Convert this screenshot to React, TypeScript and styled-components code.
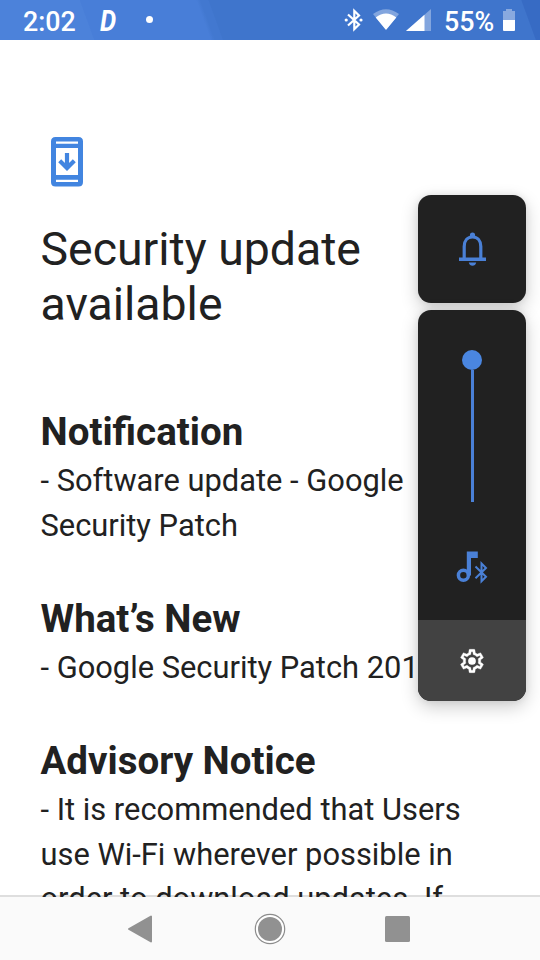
import React from "react";
import styled, { createGlobalStyle } from "styled-components";

const GlobalStyle = createGlobalStyle`
  * { box-sizing: border-box; }
  body { margin: 0; background: #fff; font-family: Roboto, "Liberation Sans", sans-serif; color: #212121; }
  svg { display: block; flex: none; }
`;

const Screen = styled.div`
  position: relative;
  display: flex;
  flex-direction: column;
  width: 540px;
  height: 960px;
  overflow: hidden;
  background: #fff;
`;

const StatusBar = styled.header`
  flex: none;
  display: flex;
  align-items: center;
  height: 40px;
  padding: 2px 25px 0 23px;
  color: #fff;
  background:
    linear-gradient(70deg, transparent 0 503px, #376bc4 504px),
    linear-gradient(70deg, #4c82da 0 88px, #487ed8 89px 198px, #4278d0 202px 209px, #3f75cc 210px);
`;

const StatusText = styled.span<{ $width: number }>`
  width: ${(p) => p.$width}px;
  padding-top: 2px;
  font-size: 26.8px;
  line-height: 32px;
  font-weight: 500;
  white-space: nowrap;
`;

const CarrierMark = styled.span`
  width: 47px;
  padding-top: 1px;
  padding-left: 1px;
  font-size: 28.5px;
  line-height: 32px;
  font-weight: 700;
  font-style: italic;
  transform: scaleX(0.9);
  transform-origin: left center;
`;

const Dot = styled.i`
  width: 7px;
  height: 7px;
  border-radius: 50%;
  background: #fff;
  margin-top: -3px;
`;

const StatusIcons = styled.div`
  display: flex;
  align-items: center;
  margin-left: auto;
`;

const IconSlot = styled.span<{ $gap: number; $lift?: number }>`
  margin-right: ${(p) => p.$gap}px;
  margin-top: ${(p) => -(p.$lift ?? 0)}px;
`;

const Content = styled.main`
  flex: 1;
  min-height: 0;
  z-index: 1;
  margin-bottom: -2px;
  overflow: hidden;
  padding: 96px 40px 0;
`;

const Title = styled.h1`
  margin: 33.5px 0 0;
  padding-left: 0.5px;
  font-size: 46.4px;
  line-height: 55px;
  font-weight: 400;
`;

const Section = styled.section<{ $top: number }>`
  margin-top: ${(p) => p.$top}px;
  padding-left: 0.5px;
`;

const Heading = styled.h2`
  margin: 0;
  font-size: 38.5px;
  line-height: 54px;
  font-weight: 700;
`;

const Line = styled.p`
  margin: 0;
  font-size: 30.85px;
  line-height: 44.6px;
  white-space: nowrap;
`;

const VolumeDialog = styled.aside`
  position: absolute;
  z-index: 2;
  top: 195px;
  right: 14px;
  width: 108px;
  display: flex;
  flex-direction: column;
  gap: 7px;
`;

const Card = styled.div<{ $height: number }>`
  display: flex;
  flex-direction: column;
  align-items: center;
  height: ${(p) => p.$height}px;
  border-radius: 13px;
  overflow: hidden;
  background: #212121;
  box-shadow: 0 6px 18px rgba(0, 0, 0, 0.2), 0 0 7px rgba(0, 0, 0, 0.08);
`;

const RingerButton = styled.button`
  flex: 1;
  width: 100%;
  display: grid;
  place-items: center;
  border: 0;
  padding: 0 0 0 1px;
  background: transparent;
`;

const Slider = styled.div`
  display: flex;
  flex-direction: column;
  align-items: center;
  height: 192px;
  padding-top: 40px;
`;

const Thumb = styled.div`
  width: 20px;
  height: 20px;
  flex: none;
  border-radius: 50%;
  background: #4a86e0;
`;

const Track = styled.div`
  width: 3px;
  flex: 1;
  background: #4a80d6;
`;

const StreamIcon = styled.div`
  flex: 1;
  padding-top: 48px;
`;

const SettingsButton = styled.button`
  width: 100%;
  height: 81px;
  display: grid;
  place-items: center;
  border: 0;
  padding: 0;
  background: #424242;
`;

const NavBar = styled.nav`
  flex: none;
  display: flex;
  align-items: center;
  justify-content: center;
  height: 65px;
  padding-right: 1px;
  border-top: 2px solid #dedede;
  background: #fafafa;
`;

const NavButton = styled.button`
  display: grid;
  place-items: center;
  width: 128px;
  height: 60px;
  border: 0;
  padding: 0;
  background: transparent;
`;

const BluetoothIcon = () => (
  <svg width="20" height="24" viewBox="0 0 20 24" fill="none" stroke="#fff" strokeWidth="2.2">
    <path d="M4 6.500 15 16.500 10.300 21.200V2.800l4.700 4.700L4 17.500" />
    <circle cx="2.200" cy="12" r="1.600" fill="#fff" stroke="none" />
    <circle cx="17" cy="12" r="1.600" fill="#fff" stroke="none" />
  </svg>
);

const WifiIcon = () => (
  <svg width="26" height="22" viewBox="0 0 26 22" fill="#fff">
    <path d="M0 5Q13-4.400 26 5L13 21Z" opacity=".35" />
    <path d="M2.700 8.500Q13 .6 23.300 8.500L13.800 20q-.8 1-1.600 0Z" />
  </svg>
);

const SignalIcon = () => (
  <svg width="25" height="23" viewBox="0 0 25 23" fill="#fff">
    <path d="M25 0V22H0Z" opacity=".35" />
    <path d="M18.500 5.700V22H0Z" />
  </svg>
);

const BatteryIcon = () => (
  <svg width="12" height="22" viewBox="0 0 12 22" fill="#fff">
    <path d="M3 0h6v2h3v9H0V2h3Z" opacity=".38" />
    <path d="M0 11h12v10q0 1-1 1H1q-1 0-1-1Z" />
  </svg>
);

const PhoneUpdateIcon = () => (
  <svg width="54" height="52" viewBox="0 0 54 52">
    <path
      fill="#4285e0"
      fillRule="evenodd"
      d="M15.500 1h23Q43 1 43 5.500v40.500Q43 50.500 38.500 50.500h-23Q11 50.500 11 46v-40.500Q11 1 15.500 1ZM16 5.500v2.200h22v-2.200ZM16 12v27h22v-27ZM16 43.800v2.200h22v-2.200Z"
    />
    <path d="M27 17v14M19.700 24.700 27 32l7.300-7.300" fill="none" stroke="#4285e0" strokeWidth="4.200" />
  </svg>
);

const BellIcon = () => (
  <svg width="28" height="34" viewBox="0 0 28 34" fill="#4a80d6">
    <circle cx="13.500" cy="3.200" r="2.600" />
    <path d="M5.200 27V14.500C5.200 8.500 8.500 5 13.500 5s8.300 3.500 8.300 9.500V27" fill="none" stroke="#4a80d6" strokeWidth="3.200" />
    <path d="M0 25.600h27v3.400H0ZM9.800 30.500h7.400q-.8 3.200-3.700 3.200t-3.700-3.200Z" />
  </svg>
);

const MusicBluetoothIcon = () => (
  <svg width="32" height="34" viewBox="0 0 32 34" fill="none" stroke="#4a80d6">
    <circle cx="7.400" cy="25.300" r="5" strokeWidth="3.500" />
    <path d="M10.800 1.500h11v6.500h-6.800v17.500h-4.200Z" fill="#4a80d6" stroke="none" />
    <path d="m19.500 16.500 10.500 10.300-4.500 4.500V13.500l4.500 4.500-10.500 10.300" strokeWidth="2" />
  </svg>
);

const GearIcon = () => (
  <svg width="28" height="28" viewBox="0 0 24 24">
    <path
      fill="#fff"
      stroke="#fff"
      strokeWidth=".3"
      d="M19.430 12.980c.04-.32.07-.64.07-.98s-.03-.66-.07-.98l2.110-1.650c.19-.15.24-.42.12-.64l-2-3.460a.5.5 0 0 0-.61-.22l-2.490 1c-.52-.4-1.080-.73-1.690-.98l-.38-2.650A.49.49 0 0 0 14 2h-4a.49.49 0 0 0-.49.420l-.38 2.650c-.61.25-1.170.59-1.690.98l-2.490-1a.5.5 0 0 0-.61.220l-2 3.460c-.13.220-.07.490.12.640l2.110 1.650c-.04.32-.07.65-.07.98s.03.66.07.98l-2.110 1.650c-.19.150-.24.420-.12.640l2 3.460c.12.220.39.300.61.220l2.490-1c.52.400 1.080.730 1.690.98l.38 2.650c.03.240.24.420.49.420h4c.25 0 .46-.18.49-.42l.38-2.650c.61-.25 1.170-.59 1.690-.98l2.490 1c.23.090.49 0 .61-.22l2-3.460c.12-.22.07-.49-.12-.64l-2.110-1.650Zm-1.980-1.710c.04.310.05.520.05.730s-.02.430-.05.730l-.14 1.130.89.700 1.080.840-.7 1.210-1.270-.51-1.040-.42-.9.680c-.43.320-.84.560-1.250.730l-1.060.430-.16 1.130-.2 1.350h-1.400l-.19-1.350-.16-1.130-1.060-.43a5.670 5.670 0 0 1-1.230-.71l-.91-.7-1.060.430-1.270.510-.7-1.210 1.080-.84.890-.7-.14-1.130A7.500 7.500 0 0 1 6.500 12c0-.2.020-.43.050-.73l.14-1.130-.89-.7-1.080-.84.700-1.210 1.270.510 1.040.420.900-.68c.43-.32.840-.56 1.250-.73l1.060-.43.160-1.130.200-1.350h1.390l.19 1.350.16 1.130 1.060.430c.43.180.83.410 1.230.710l.91.700 1.060-.43 1.270-.51.700 1.210-1.070.850-.89.700.14 1.130Z"
    />
    <circle cx="12" cy="12" r="3.300" fill="#fff" />
  </svg>
);

const BackIcon = () => (
  <svg width="28" height="28" viewBox="0 0 28 28">
    <path d="M23 1.500v25L1 14Z" fill="#919191" stroke="#919191" strokeWidth="2" strokeLinejoin="round" />
  </svg>
);

const HomeIcon = () => (
  <svg width="32" height="32" viewBox="0 0 32 32">
    <circle cx="16" cy="16" r="14.700" fill="#fff" stroke="#8c8c8c" strokeWidth="1.200" />
    <circle cx="16" cy="16" r="12" fill="#919191" />
  </svg>
);

const RecentsIcon = () => (
  <svg width="25" height="26" viewBox="0 0 25 26">
    <rect width="25" height="26" rx="1.500" fill="#919191" />
  </svg>
);

const sections = [
  { heading: "Notification", top: 73.5, lines: ["- Software update - Google", "Security Patch"] },
  { heading: "What’s New", top: 43.5, lines: ["- Google Security Patch 201"] },
  {
    heading: "Advisory Notice",
    top: 44,
    lines: ["- It is recommended that Users", "use Wi-Fi wherever possible in", "order to download updates. If"],
  },
];

export default function App() {
  return (
    <Screen>
      <GlobalStyle />
      <StatusBar>
        <StatusText $width={76}>2:02</StatusText>
        <CarrierMark>D</CarrierMark>
        <Dot />
        <StatusIcons>
          <IconSlot $gap={9} $lift={2}><BluetoothIcon /></IconSlot>
          <IconSlot $gap={7} $lift={2}><WifiIcon /></IconSlot>
          <IconSlot $gap={13} $lift={1}><SignalIcon /></IconSlot>
          <StatusText $width={59}>55%</StatusText>
          <IconSlot $gap={0} $lift={2}><BatteryIcon /></IconSlot>
        </StatusIcons>
      </StatusBar>
      <Content>
        <PhoneUpdateIcon />
        <Title>
          Security update
          <br />
          available
        </Title>
        {sections.map((s) => (
          <Section key={s.heading} $top={s.top}>
            <Heading>{s.heading}</Heading>
            {s.lines.map((line) => (
              <Line key={line}>{line}</Line>
            ))}
          </Section>
        ))}
      </Content>
      <NavBar>
        <NavButton aria-label="Back"><BackIcon /></NavButton>
        <NavButton aria-label="Home"><HomeIcon /></NavButton>
        <NavButton aria-label="Recents"><RecentsIcon /></NavButton>
      </NavBar>
      <VolumeDialog>
        <Card $height={108}>
          <RingerButton aria-label="Ringer"><BellIcon /></RingerButton>
        </Card>
        <Card $height={391}>
          <Slider>
            <Thumb />
            <Track />
          </Slider>
          <StreamIcon><MusicBluetoothIcon /></StreamIcon>
          <SettingsButton aria-label="Settings"><GearIcon /></SettingsButton>
        </Card>
      </VolumeDialog>
    </Screen>
  );
}
